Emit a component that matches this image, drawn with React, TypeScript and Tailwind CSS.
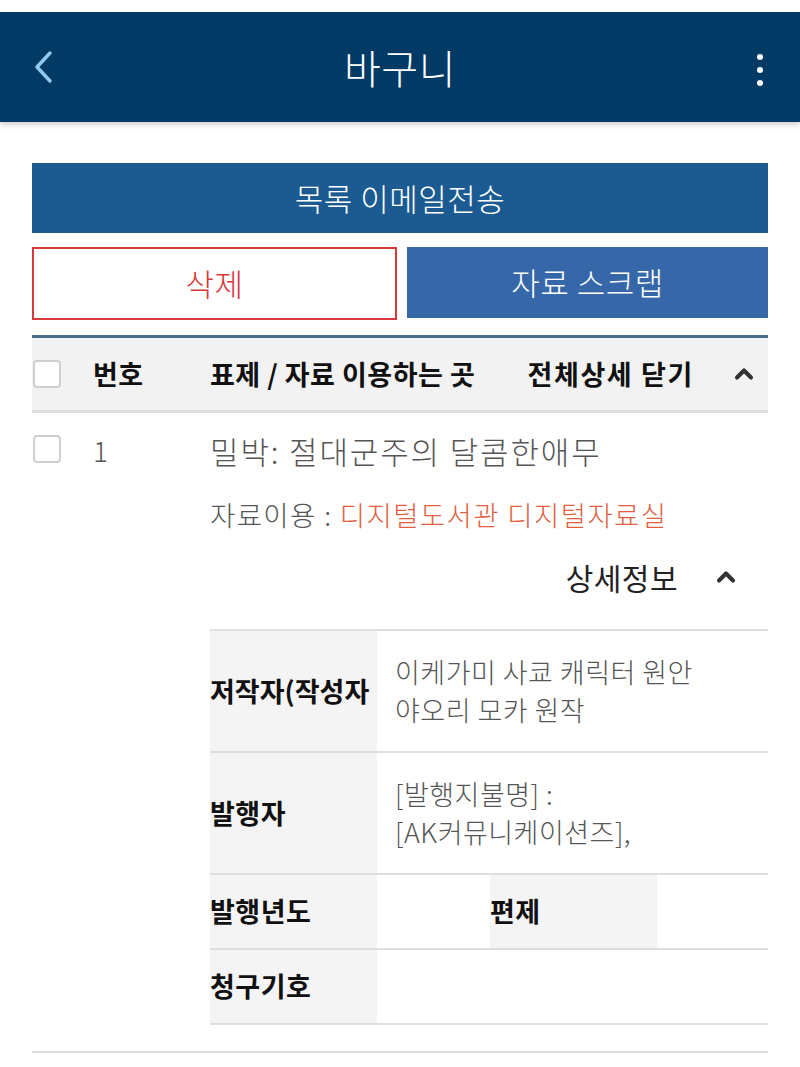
import { ChevronUp } from "lucide-react"

const font = { fontFamily: '"Noto Sans CJK KR", "Noto Sans", sans-serif' }

function Check({ className = "" }: { className?: string }) {
    return <span className={`block h-[28px] w-[28px] shrink-0 rounded-[4px] border-2 border-[#cfcfcf] bg-white ${className}`} />
}

function Chevron() {
    return <ChevronUp className="h-[28px] w-[28px] text-[#333]" strokeWidth={3.5} />
}

export default function App() {
    return (
        <div className="min-h-[1067px] bg-white tracking-[0.03em] text-[#222]" style={font}>
            <div className="h-[12px] bg-white" />
            <header className="relative flex h-[110px] items-center justify-center bg-[#023a66] shadow-[0_3px_5px_rgba(0,0,0,0.18)]">
                <svg className="absolute left-[32px] top-[38px]" width="24" height="34" viewBox="0 0 24 34" fill="none">
                    <path d="M18 3 L5 17 L18 31" stroke="#8ecbf2" strokeWidth="3.5" strokeLinecap="round" strokeLinejoin="round" />
                </svg>
                <h1 className="text-[40px] font-light leading-none text-white">바구니</h1>
                <div className="absolute right-[37px] top-[42px] flex flex-col gap-[7px]">
                    <span className="block h-[6px] w-[6px] rounded-full bg-white" />
                    <span className="block h-[6px] w-[6px] rounded-full bg-white" />
                    <span className="block h-[6px] w-[6px] rounded-full bg-white" />
                </div>
            </header>

            <main className="px-[32px] pt-[41px]">
                <button className="flex h-[70px] w-full items-center justify-center bg-[#1b5b92] text-[31px] font-light text-white">
                    목록 이메일전송
                </button>
                <div className="mt-[14px] flex gap-[10px]">
                    <button className="flex h-[73px] flex-1 items-center justify-center border-2 border-[#d7393b] bg-white text-[31px] font-light text-[#d7393b]">
                        삭제
                    </button>
                    <button className="flex h-[71px] flex-1 items-center justify-center bg-[#3667a8] text-[31px] font-light text-white">
                        자료 스크랩
                    </button>
                </div>

                <div className="mt-[15px] border-t-[3px] border-[#4b6d8c]">
                    <div className="flex h-[75px] items-center border-b-[3px] border-[#dddddd] bg-[#f2f2f2] text-[27px] font-bold text-[#111]">
                        <Check className="ml-[1px]" />
                        <span className="ml-[32px] w-[117px]">번호</span>
                        <span className="flex-1 whitespace-nowrap">표제 / 자료 이용하는 곳</span>
                        <span className="whitespace-nowrap tracking-[0.06em]">전체상세 닫기</span>
                        <span className="ml-[36px] mr-[10px]"><Chevron /></span>
                    </div>

                    <div className="flex pt-[18px]">
                        <Check className="ml-[1px] mt-[4px]" />
                        <span className="ml-[32px] w-[117px] text-[28px] font-light leading-[38px] text-[#555]">1</span>
                        <div className="flex-1 font-light">
                            <div className="text-[31px] leading-[40px] tracking-[0.06em] text-[#555]">밀박: 절대군주의 달콤한애무</div>
                            <div className="mt-[24px] text-[27.5px] leading-[38px] tracking-[0.05em] text-[#555]">
                                자료이용 : <span className="text-[#e0613f]">디지털도서관 디지털자료실</span>
                            </div>
                            <div className="mt-[24px] flex items-center justify-end text-[30px] font-normal leading-[40px] text-[#222]">
                                <span>상세정보</span>
                                <span className="ml-[34px] mr-[28px]"><Chevron /></span>
                            </div>

                            <table className="mt-[32px] w-full table-fixed border-collapse text-left">
                                <colgroup>
                                    <col className="w-[167px]" />
                                    <col className="w-[113px]" />
                                    <col className="w-[167px]" />
                                    <col />
                                </colgroup>
                                <tbody>
                                    <tr className="h-[122px] border-y-2 border-[#dedede]">
                                        <th className="whitespace-nowrap bg-[#f4f4f4] text-[27px] font-bold tracking-normal text-[#111]">저작자(작성자</th>
                                        <td colSpan={3} className="pl-[18px] text-[27px] leading-[38px] text-[#555]">
                                            이케가미 사쿄 캐릭터 원안<br />야오리 모카 원작
                                        </td>
                                    </tr>
                                    <tr className="h-[122px] border-b-2 border-[#dedede]">
                                        <th className="bg-[#f4f4f4] text-[27px] font-bold text-[#111]">발행자</th>
                                        <td colSpan={3} className="pl-[18px] text-[27px] leading-[38px] text-[#555]">
                                            [발행지불명] :<br />[AK커뮤니케이션즈],
                                        </td>
                                    </tr>
                                    <tr className="h-[75px] border-b-2 border-[#dedede]">
                                        <th className="bg-[#f4f4f4] text-[27px] font-bold text-[#111]">발행년도</th>
                                        <td />
                                        <th className="bg-[#f4f4f4] text-[27px] font-bold text-[#111]">편제</th>
                                        <td />
                                    </tr>
                                    <tr className="h-[75px] border-b-2 border-[#dedede]">
                                        <th className="bg-[#f4f4f4] text-[27px] font-bold text-[#111]">청구기호</th>
                                        <td colSpan={3} />
                                    </tr>
                                </tbody>
                            </table>
                        </div>
                    </div>
                    <div className="mt-[26px] border-b-2 border-[#dedede]" />
                </div>
            </main>
        </div>
    )
}
